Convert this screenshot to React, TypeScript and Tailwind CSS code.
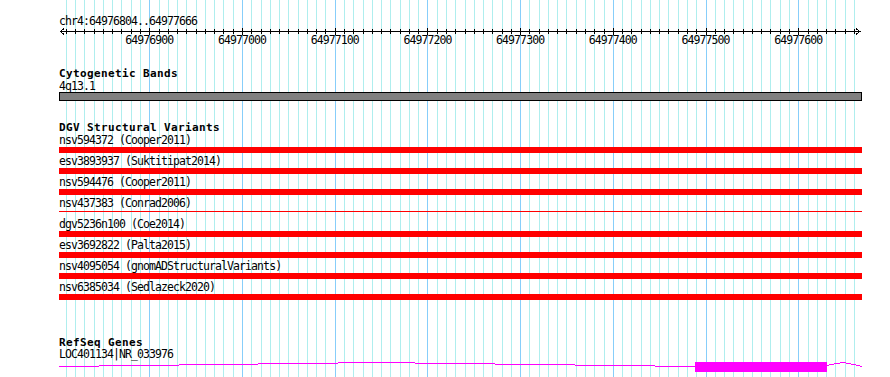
import React from 'react';

// region shown: chr4:64976804..64977666
const START = 64976804;
const END = 64977666;

// pixel x of a base position (measured off the ruler)
const px = (bp: number) => 149.3 + (bp - 64976900) * 0.9271;

const gridStops: number[] = [];
for (let b = Math.ceil(START / 10) * 10; b <= END; b += 10) gridStops.push(b);
const majors = gridStops.filter((b) => b % 100 === 0);

const variants: { name: string; thin?: boolean }[] = [
    { name: 'nsv594372 (Cooper2011)' },
    { name: 'esv3893937 (Suktitipat2014)' },
    { name: 'nsv594476 (Cooper2011)' },
    { name: 'nsv437383 (Conrad2006)', thin: true },
    { name: 'dgv5236n100 (Coe2014)' },
    { name: 'esv3692822 (Palta2015)' },
    { name: 'nsv4095054 (gnomADStructuralVariants)' },
    { name: 'nsv6385034 (Sedlazeck2020)' },
];

// intron "hat" drawn as 1px steps, like the original raster
const intronSteps: [number, number, number][] = [
    [59, 99, 366], [99, 179, 365], [179, 258, 364], [258, 338, 363], [338, 415, 362],
    [415, 495, 363], [495, 575, 364], [575, 655, 365], [655, 695, 366],
    [827, 829, 365], [829, 834, 364], [834, 840, 363], [840, 846, 362],
    [846, 851, 363], [851, 856, 364], [856, 860, 365], [860, 862, 366],
];

const mono = "font-['DejaVu_Sans_Mono','Liberation_Mono',monospace]";

const Grid = () => (
    <svg className="absolute inset-0 pointer-events-none" width={890} height={377} shapeRendering="crispEdges">
        {gridStops.map((b) => (
            <rect key={b} x={Math.round(px(b))} y={0} width={1} height={377} fill={b % 100 === 0 ? '#87cefa' : '#afeeee'} />
        ))}
    </svg>
);

const Ruler = () => (
    <div className="relative h-[19px] -ml-[59px] w-[890px]">
        <svg className="absolute inset-0" width={890} height={19} shapeRendering="crispEdges">
            <rect x={60} y={3} width={801} height={1} fill="#000" />
            {gridStops.map((b) => (
                <rect key={b} x={Math.round(px(b))} y={b % 100 === 0 ? 0 : 1} width={1} height={b % 100 === 0 ? 7 : 5} fill="#000" />
            ))}
            <polyline points="64,0.5 60.5,3.5 64,6.5" fill="none" stroke="#000" strokeWidth={1} />
            <polyline points="856,0.5 859.5,3.5 856,6.5" fill="none" stroke="#000" strokeWidth={1} />
        </svg>
        {majors.map((b) => (
            <span
                key={b}
                className="absolute top-[6px] -translate-x-1/2 text-[11.5px] leading-[13px] tracking-[-0.92px] text-black"
                style={{ left: px(b) }}
            >
                {b}
            </span>
        ))}
    </div>
);

const Title = ({ children, h = 'h-[13px] leading-[13px]' }: { children: React.ReactNode; h?: string }) => (
    <div className={`${h} text-[11px] font-bold tracking-[0.38px] text-black whitespace-nowrap`}>{children}</div>
);

const Label = ({ children, h = 'h-[13px] leading-[13px]' }: { children: React.ReactNode; h?: string }) => (
    <div className={`${h} text-[11.5px] tracking-[-0.92px] text-black whitespace-nowrap`}>{children}</div>
);

export default function App() {
    return (
        <div className={`relative w-[890px] h-[377px] bg-white overflow-hidden ${mono}`}>
            <Grid />
            <div className="relative flex flex-col pl-[59px] pt-[15px]">
                <Label>chr4:64976804..64977666</Label>
                <Ruler />

                <div className="mt-[20px]">
                    <Title>Cytogenetic Bands</Title>
                    <Label h="h-[12px] leading-[12px]">4q13.1</Label>
                    <div className="w-[803px] h-[9px] border border-black bg-[#808080]" />
                </div>

                <div className="mt-[20px]">
                    <Title>DGV Structural Variants</Title>
                    {variants.map((v) => (
                        <div key={v.name} className="h-[21px] flex flex-col">
                            <Label>{v.name}</Label>
                            <svg className="block" width={803} height={6} shapeRendering="crispEdges">
                                <rect x={0} y={v.thin ? 1 : 0} width={803} height={v.thin ? 1 : 6} fill="#ff0000" />
                            </svg>
                        </div>
                    ))}
                </div>

                <div className="mt-[35px]">
                    <Title h="h-[12px] leading-[12px]">RefSeq Genes</Title>
                    <Label h="h-[11px] leading-[11px]">LOC401134|NR_033976</Label>
                    <svg className="-ml-[59px] block" width={890} height={14} shapeRendering="crispEdges">
                        {intronSteps.map(([x1, x2, y]) => (
                            <rect key={`${x1}-${y}`} x={x1} y={y - 360} width={x2 - x1} height={1} fill="#ff00ff" />
                        ))}
                        <rect x={695} y={2} width={132} height={10} fill="#ff00ff" />
                    </svg>
                </div>
            </div>
        </div>
    );
}
